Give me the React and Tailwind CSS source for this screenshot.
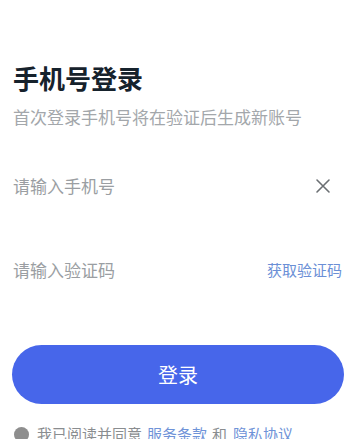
import React, { useState } from 'react';

const App = () => {
  const [phone, setPhone] = useState('');
  const [code, setCode] = useState('');

  return (
    <div className="w-[354px] h-[439px] overflow-hidden bg-white font-['Noto_Sans_CJK_SC',sans-serif] px-[12px]">
      <div className="pt-[60px]">
        <h1 className="text-[26px] leading-[36px] font-bold text-[#16222c] pl-[1px]">手机号登录</h1>
        <p className="mt-[10px] text-[17px] leading-[22px] text-[#a3a7ab] pl-[1px]">首次登录手机号将在验证后生成新账号</p>
      </div>

      <div className="mt-[33px] h-[50px] flex items-center">
        <input
          value={phone}
          onChange={(e) => setPhone(e.target.value)}
          placeholder="请输入手机号"
          className="flex-1 min-w-0 text-[17px] text-[#333] placeholder-[#9a9ea2] outline-none bg-transparent pl-[1px]"
        />
        <button className="w-[24px] h-[24px] flex items-center justify-center mr-[7px] text-[#6b6f73]">
          <svg width="16" height="16" viewBox="0 0 16 16" fill="none" stroke="currentColor" strokeWidth="1.6" strokeLinecap="round">
            <path d="M2 2L14 14M14 2L2 14" />
          </svg>
        </button>
      </div>

      <div className="mt-[34px] h-[50px] flex items-center">
        <input
          value={code}
          onChange={(e) => setCode(e.target.value)}
          placeholder="请输入验证码"
          className="flex-1 min-w-0 text-[17px] text-[#333] placeholder-[#9a9ea2] outline-none bg-transparent pl-[1px]"
        />
        <button className="text-[15px] text-[#6b8fd6]">获取验证码</button>
      </div>

      <button className="mt-[50px] w-[332px] h-[59px] rounded-full bg-[#4766ea] text-white text-[20px]">
        登录
      </button>

      <div className="mt-[20px] flex items-center pl-[2px] text-[15px] leading-[20px]">
        <span className="w-[15px] h-[15px] rounded-full bg-[#8e8e8e] mr-[8px]" />
        <span className="text-[#8a8d90]">我已阅读并同意</span>
        <span className="text-[#6f93d8] ml-[5px]">服务条款</span>
        <span className="text-[#8a8d90] ml-[5px]">和</span>
        <span className="text-[#6f93d8] ml-[6px]">隐私协议</span>
      </div>
    </div>
  );
};

export default App;
